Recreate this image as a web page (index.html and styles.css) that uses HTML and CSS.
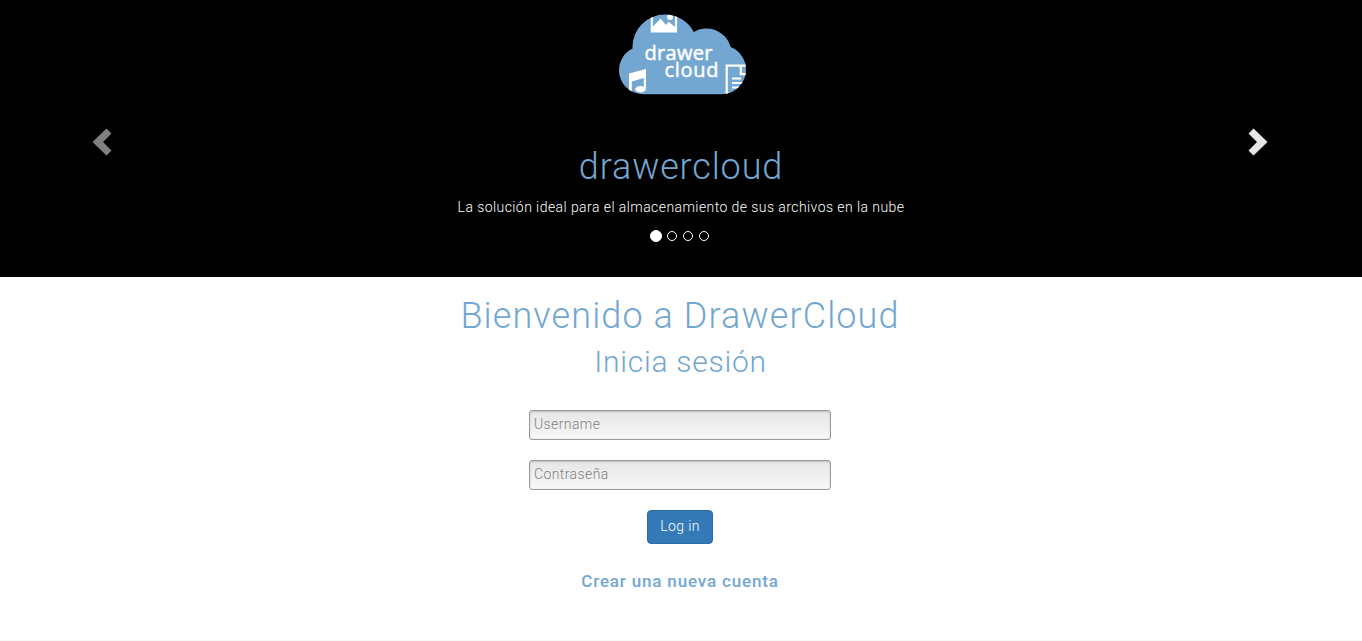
FILE: index.html
```html
<!DOCTYPE html>
<html lang="es">
<head>
<meta charset="utf-8">
<title>DrawerCloud</title>
<link rel="stylesheet" href="styles.css">
</head>
<body>
<header class="carousel">
  <button class="arrow arrow-prev" aria-label="Anterior"><svg width="20" height="28" viewBox="0 0 20 28"><path d="M14.5 0.5 19.5 5.5 11 14 19.5 22.5 14.5 27.5 0.5 14z"/></svg></button>
  <div class="slide">
    <svg class="logo" width="128" height="81" viewBox="0 0 128 81">
      <defs>
        <clipPath id="cloud">
          <circle cx="46" cy="33" r="32.5"/>
          <circle cx="87.500" cy="39.500" r="25"/>
          <circle cx="24" cy="56.2" r="24"/>
          <circle cx="102.5" cy="55.7" r="24.5"/>
          <rect x="24" y="36" width="78" height="44.2"/>
        </clipPath>
      </defs>
      <g clip-path="url(#cloud)">
        <rect class="logo-fill" width="128" height="81"/>
        <path class="logo-line" d="M32.800 0V17.500H57V0"/>
        <path class="logo-shape" d="M32.500 18V14L41.500 4.500 47 11 49.500 7.500 57 14V18z"/>
        <circle class="logo-shape" cx="51" cy="3" r="3"/>
        <path class="logo-shape" d="M10 59.5 27 55V74.500H24.800V64L12.800 67.500V81H10z"/>
        <ellipse class="logo-shape" cx="21.500" cy="75.300" rx="5.200" ry="3.200"/>
        <path class="logo-line" d="M128 51.700H107.700V79.500H128M121.800 52V60.200H128"/>
        <path class="logo-line" d="M113 64.500H122M113 69H128M113 73.500H128M113 78H122"/>
      </g>
      <text class="logo-text" x="25.500" y="46" textLength="68">drawer</text>
      <text class="logo-text" x="45.500" y="62.500" textLength="54">cloud</text>
    </svg>
    <h1 class="title">drawercloud</h1>
    <p class="tagline">La solución ideal para el almacenamiento de sus archivos en la nube</p>
    <div class="dots"><i class="dot dot-active"></i><i class="dot"></i><i class="dot"></i><i class="dot"></i></div>
  </div>
  <button class="arrow arrow-next" aria-label="Siguiente"><svg width="20" height="28" viewBox="0 0 20 28"><path d="M5.500 0.500 0.500 5.500 9 14 0.500 22.500 5.500 27.500 19.500 14z"/></svg></button>
</header>
<main class="login">
  <h1 class="welcome">Bienvenido a DrawerCloud</h1>
  <h2 class="subtitle">Inicia sesión</h2>
  <form class="form">
    <input class="field" type="text" placeholder="Username">
    <input class="field" type="password" placeholder="Contraseña">
    <button class="submit" type="button">Log in</button>
  </form>
  <a class="register">Crear una nueva cuenta</a>
</main>
<footer class="footer"></footer>
</body>
</html>
```
FILE: styles.css
```css
* { box-sizing: border-box; }
body {
  margin: 0;
  height: 641px;
  overflow: hidden;
  display: flex;
  flex-direction: column;
  background: #fff;
  color: #73a7d1;
  font-family: Roboto, "Liberation Sans", sans-serif;
  font-weight: 300;
  font-size: 14px;
  line-height: 20px;
}
h1, h2, p { margin: 0; font-weight: 300; white-space: nowrap; }
.carousel {
  height: 277px;
  flex: none;
  display: flex;
  justify-content: space-between;
  background: #000;
}
.arrow {
  width: 204px;
  padding: 10px 0 0;
  border: 0;
  background: none;
}
.arrow svg { fill: #fff; }
.arrow-prev { opacity: .5; }
.arrow-next { opacity: .9; padding-right: 4px; }
.slide {
  display: flex;
  flex-direction: column;
  align-items: center;
  padding: 14px 2px 0 0;
}
.logo { display: block; margin-left: 5px; }
.logo-fill { fill: #73a7d1; }
.logo-shape { fill: #fff; }
.logo-line { fill: none; stroke: #fff; stroke-width: 2.2; }
.logo-text {
  fill: #fff;
  stroke: #fff;
  stroke-width: .5px;
  font: 400 20px "Open Sans", "Noto Sans", sans-serif;
}
.title { margin: 52px 0 0 2px; font-size: 36px; line-height: 40px; letter-spacing: .85px; }
.tagline { margin: 10px 0 0 2px; color: #fff; letter-spacing: .43px; }
.dots { display: flex; align-items: center; gap: 6px; height: 12px; margin: 13px 2px 0 0; }
.dot { width: 10px; height: 10px; border: 1px solid #fff; border-radius: 50%; }
.dot-active { width: 12px; height: 12px; margin-right: -1px; background: #fff; }
.login {
  flex: 1;
  display: flex;
  flex-direction: column;
  align-items: center;
  padding: 19px 2px 0 0;
}
.welcome { font-size: 36px; line-height: 40px; letter-spacing: 1.1px; }
.subtitle { margin: 9px 0 0 1px; font-size: 30px; line-height: 33px; letter-spacing: .75px; }
.form {
  display: flex;
  flex-direction: column;
  align-items: center;
  gap: 20px;
  margin-top: 32px;
}
.field {
  width: 302px;
  height: 30px;
  padding: 0 4px 2px;
  border: 1px solid #999;
  border-radius: 3px;
  background: linear-gradient(#e6e6e6, #f7f7f7);
  box-shadow: inset 0 1px 2px rgba(0, 0, 0, .18);
  font: inherit;
  letter-spacing: .4px;
}
.field::placeholder { color: #808080; font-weight: 300; opacity: 1; }
.submit {
  width: 66px;
  height: 34px;
  padding: 0 0 2px;
  border: 1px solid #2e6da4;
  border-radius: 4px;
  background: #337ab7;
  color: #fff;
  font: inherit;
  letter-spacing: .4px;
}
.register { margin-top: 27px; font-size: 17px; font-weight: 500; letter-spacing: .83px; }
.footer { height: 1px; background: #f8f8f8; }
```
